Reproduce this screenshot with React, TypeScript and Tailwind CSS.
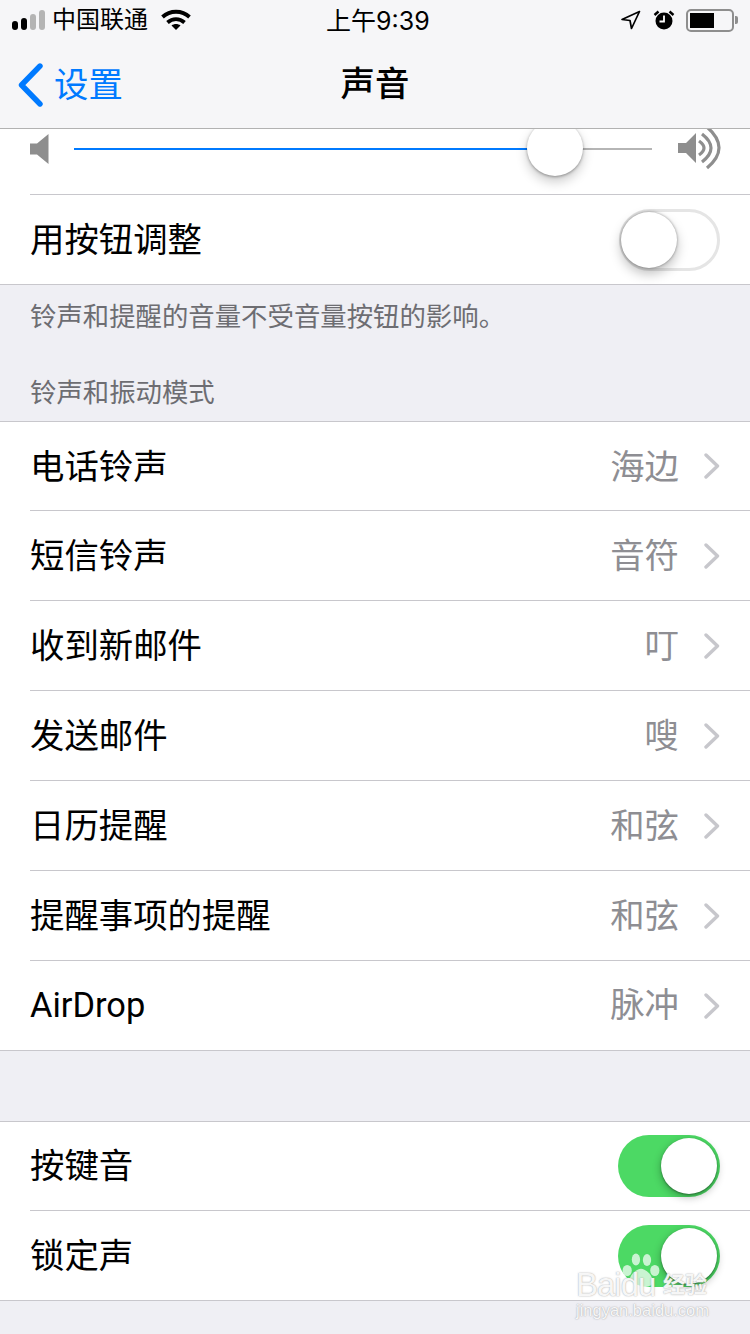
const CJK = "font-['Roboto','Noto_Sans_CJK_SC',sans-serif]";

function Chevron() {
  return (
    <svg width="16" height="26" viewBox="0 0 16 26" fill="none" className="shrink-0">
      <path d="M2 2 L13.5 13 L2 24" stroke="#c7c7cc" strokeWidth="3.4" strokeLinecap="round" strokeLinejoin="round" />
    </svg>
  );
}

function Toggle({ on }: { on: boolean }) {
  if (on) {
    return (
      <div className="relative w-[102px] h-[62px] rounded-full bg-[#4cd964] shrink-0">
        <div className="absolute left-[43px] top-[3px] w-[56px] h-[56px] rounded-full bg-white shadow-[0_3px_8px_rgba(0,0,0,0.3),0_1px_2px_rgba(0,0,0,0.35)]" />
      </div>
    );
  }
  return (
    <div className="relative w-[101px] h-[62px] rounded-full border-[3px] border-[#e5e5e5] bg-white shrink-0">
      <div className="absolute left-[-1px] top-0 w-[56px] h-[56px] rounded-full bg-white shadow-[0_6px_12px_rgba(0,0,0,0.25),0_0_3px_rgba(0,0,0,0.4)]" />
    </div>
  );
}

function LinkRow({ label, value, first, last }: { label: string; value: string; first?: boolean; last?: boolean }) {
  return (
    <div className="pl-[30px]">
      <div className={`${first || last ? "h-[89px]" : "h-[90px]"} flex items-center justify-between pr-[30px] ${last ? "" : "border-b border-[#c8c7cc]"}`}>
        <span className={`text-[34.4px] text-black leading-none ${last ? "" : "pt-[2px]"}`}>{label}</span>
        <div className="flex items-center gap-[25px]">
          <span className={`text-[34.4px] text-[#8e8e93] leading-none ${last ? "" : "pt-[2px]"}`}>{value}</span>
          <Chevron />
        </div>
      </div>
    </div>
  );
}

function SwitchRow({ label, last }: { label: string; last?: boolean }) {
  return (
    <div className="pl-[30px]">
      <div className={`h-[89px] flex items-center justify-between pr-[30px] ${last ? "" : "border-b border-[#c8c7cc]"}`}>
        <span className={`text-[34.4px] text-black leading-none ${last ? "pt-[2px]" : ""}`}>{label}</span>
        <Toggle on />
      </div>
    </div>
  );
}

function StatusBar() {
  return (
    <div className="relative h-[40px] flex items-center justify-between pl-[12px] pr-[12px]">
      <div className="flex items-center">
        <div className="flex items-end gap-[3px] h-[20px]">
          <div className="w-[6px] h-[9px] rounded-[3px] bg-black" />
          <div className="w-[6px] h-[12px] rounded-[3px] bg-black" />
          <div className="w-[6px] h-[16px] rounded-[3px] bg-[#b4b4b4]" />
          <div className="w-[6px] h-[20px] rounded-[3px] bg-[#b4b4b4]" />
        </div>
        <span className="ml-[7px] text-[24px] leading-none text-black">中国联通</span>
        <svg width="30" height="22" viewBox="0 0 30 22" className="ml-[13px]" fill="none">
          <path d="M1.5 8 C9 1 21 1 28.5 8" stroke="#000" strokeWidth="3.8" />
          <path d="M6.5 13.5 C11.5 9 18.5 9 23.5 13.5" stroke="#000" strokeWidth="3.8" />
          <path d="M10.5 16.5 L15 21 L19.5 16.5 C17 14.5 13 14.5 10.5 16.5 Z" fill="#000" />
        </svg>
      </div>
      <span className="absolute left-[326px] top-[7px] text-[25px] leading-[28px] text-black font-['Inter','Noto_Sans_CJK_SC',sans-serif]">上午9:39</span>
      <div className="flex items-center">
        <svg width="21" height="20" viewBox="0 0 21 20" fill="none">
          <path d="M19.5 1.5 L2 9.5 L10 10.5 L11.5 18.5 Z" stroke="#000" strokeWidth="1.7" strokeLinejoin="round" />
        </svg>
        <svg width="22" height="20" viewBox="0 0 22 20" className="ml-[12px]">
          <circle cx="11" cy="11" r="8.5" fill="#000" />
          <path d="M11 5.5 V11.5 H6.5" stroke="#fff" strokeWidth="1.8" fill="none" />
          <path d="M1.5 5 L5.5 1.5 M20.5 5 L16.5 1.5" stroke="#000" strokeWidth="2.4" />
        </svg>
        <div className="ml-[11px] flex items-center">
          <div className="w-[48px] h-[23px] rounded-[5px] border-2 border-[#8e8e8e] p-[2px]">
            <div className="w-[24px] h-full bg-black" />
          </div>
          <div className="ml-[1px] w-[3px] h-[8px] rounded-r-[2px] bg-[#8e8e8e]" />
        </div>
      </div>
    </div>
  );
}

function NavBar() {
  return (
    <div className="relative h-[88px] flex items-center justify-center">
      <div className="absolute left-[18px] top-[23px] flex items-center">
        <svg width="26" height="44" viewBox="0 0 26 44" fill="none">
          <path d="M22 3 L3.5 22 L22 41" stroke="#007aff" strokeWidth="5.4" strokeLinecap="round" strokeLinejoin="round" />
        </svg>
        <span className="ml-[10px] text-[34.4px] leading-none text-[#007aff]">设置</span>
      </div>
      <span className="text-[34.4px] leading-none font-medium text-black">声音</span>
    </div>
  );
}

function VolumeRow() {
  return (
    <div className="pl-[30px]">
      <div className="h-[66px] border-b border-[#c8c7cc] pr-[30px] pb-[25px] flex items-center">
        <svg width="19" height="30" viewBox="0 0 19 30" className="shrink-0">
          <path d="M0 9.5 H7 L18.5 0 V30 L7 20.5 H0 Z" fill="#8e8e8e" />
        </svg>
        <div className="relative ml-[25px] w-[578px] h-[2px] bg-[#b5b5b5]">
          <div className="absolute left-0 top-0 h-[2px] w-[453px] bg-[#007aff]" />
          <div className="absolute left-[453px] top-[-28px] w-[56px] h-[56px] rounded-full bg-white shadow-[0_6px_12px_rgba(0,0,0,0.2),0_1px_3px_rgba(0,0,0,0.35)]" />
        </div>
        <svg width="42" height="40" viewBox="0 0 42 40" fill="none" className="ml-[26px] mt-[-2px] shrink-0 overflow-visible">
          <path d="M0 15 H8 L18 5 V35 L8 25 H0 Z" fill="#8e8e8e" />
          <path d="M21 13 Q31 20 21 27" stroke="#8e8e8e" strokeWidth="3.2" />
          <path d="M24 6 Q42 20 24 34" stroke="#8e8e8e" strokeWidth="3.2" />
          <path d="M29 -1 Q53 20 29 40" stroke="#8e8e8e" strokeWidth="3.2" />
        </svg>
      </div>
    </div>
  );
}

function Watermark() {
  const shadow = "[text-shadow:0_0_1px_rgba(130,130,130,0.6),0_0_2px_rgba(130,130,130,0.4)]";
  return (
    <div className="absolute left-[576px] top-[1253px] w-[134px] h-[64px] pointer-events-none text-white/90 font-['Liberation_Sans','Noto_Sans_CJK_SC',sans-serif]">
      <svg width="40" height="35" viewBox="0 0 42 38" className="absolute left-[45px] top-0" fill="rgba(255,255,255,0.7)">
        <ellipse cx="6" cy="19" rx="5" ry="6" />
        <ellipse cx="15.5" cy="7" rx="4.5" ry="6.5" />
        <ellipse cx="27.5" cy="7.5" rx="4.5" ry="6.5" />
        <ellipse cx="36" cy="19" rx="5" ry="6" />
        <path d="M21 17 C28 17 38 30 32 35 C26 38 16 38 10 35 C4 30 14 17 21 17 Z" />
      </svg>
      <div className={`absolute left-0 top-[13px] text-[33px] leading-[38px] tracking-[-1px] whitespace-nowrap ${shadow}`}>Baidu</div>
      <div className={`absolute left-[87px] top-[19px] text-[22px] leading-[26px] font-bold whitespace-nowrap ${shadow}`}>经验</div>
      <div className={`absolute left-0 top-[47px] text-[16.5px] leading-[20px] whitespace-nowrap ${shadow}`}>jingyan.baidu.com</div>
    </div>
  );
}

export default function App() {
  return (
    <div className={`relative w-[750px] h-[1334px] overflow-hidden bg-[#efeff4] ${CJK}`}>
      <div className="relative z-10 h-[129px] bg-[#f6f6f8] border-b border-[#b2b2b2]">
        <StatusBar />
        <NavBar />
      </div>

      <div className="bg-white border-b border-[#c8c7cc]">
        <VolumeRow />
        <div className="h-[89px] pl-[30px] pr-[30px] flex items-center justify-between">
          <span className="text-[34.4px] leading-none text-black pt-[2px]">用按钮调整</span>
          <Toggle on={false} />
        </div>
      </div>

      <div className="h-[136px] px-[30px] text-[26.4px] leading-none text-[#6d6d72]">
        <div className="pt-[19px]">铃声和提醒的音量不受音量按钮的影响。</div>
        <div className="mt-[50px]">铃声和振动模式</div>
      </div>

      <div className="bg-white border-y border-[#c8c7cc]">
        <LinkRow label="电话铃声" value="海边" first />
        <LinkRow label="短信铃声" value="音符" />
        <LinkRow label="收到新邮件" value="叮" />
        <LinkRow label="发送邮件" value="嗖" />
        <LinkRow label="日历提醒" value="和弦" />
        <LinkRow label="提醒事项的提醒" value="和弦" />
        <LinkRow label="AirDrop" value="脉冲" last />
      </div>

      <div className="h-[70px]" />

      <div className="bg-white border-y border-[#c8c7cc]">
        <SwitchRow label="按键音" />
        <SwitchRow label="锁定声" last />
      </div>

      <Watermark />
    </div>
  );
}
